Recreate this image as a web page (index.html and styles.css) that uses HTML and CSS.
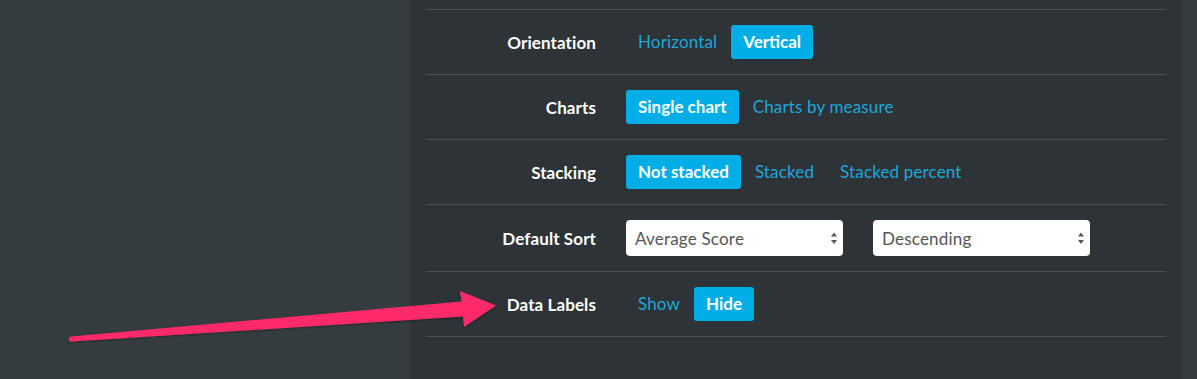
FILE: index.html
```html
<!DOCTYPE html>
<html>
<head>
<meta charset="utf-8">
<link rel="stylesheet" href="styles.css">
</head>
<body>
<div class="page">
  <div class="side"></div>
  <div class="panel">
    <div class="row">
      <div class="label">Orientation</div>
      <div class="options">
        <span class="opt">Horizontal</span>
        <span class="opt active">Vertical</span>
      </div>
    </div>
    <div class="row">
      <div class="label">Charts</div>
      <div class="options">
        <span class="opt active">Single chart</span>
        <span class="opt">Charts by measure</span>
      </div>
    </div>
    <div class="row">
      <div class="label">Stacking</div>
      <div class="options">
        <span class="opt active">Not stacked</span>
        <span class="opt">Stacked</span>
        <span class="opt">Stacked percent</span>
      </div>
    </div>
    <div class="row">
      <div class="label">Default Sort</div>
      <div class="selects">
        <div class="select">
          <span>Average Score</span>
          <svg class="caret" width="8" height="13" viewBox="0 0 8 13"><path d="M4 0.5 L7 4.5 L1 4.5 Z M1 8 L7 8 L4 12 Z" fill="#555"/></svg>
        </div>
        <div class="select">
          <span>Descending</span>
          <svg class="caret" width="8" height="13" viewBox="0 0 8 13"><path d="M4 0.5 L7 4.5 L1 4.5 Z M1 8 L7 8 L4 12 Z" fill="#555"/></svg>
        </div>
      </div>
    </div>
    <div class="row">
      <div class="label">Data Labels</div>
      <div class="options">
        <span class="opt">Show</span>
        <span class="opt active">Hide</span>
      </div>
    </div>
  </div>
  <div class="edge"></div>
</div>
<svg class="arrow" width="1197" height="379" viewBox="0 0 1197 379">
  <defs>
    <filter id="sh" x="-10%" y="-50%" width="120%" height="200%">
      <feDropShadow dx="0" dy="1" stdDeviation="1" flood-color="#000" flood-opacity="0.35"/>
    </filter>
  </defs>
  <path filter="url(#sh)" fill="#ff2a6a" d="M71 336.6 L461.5 301.5 L460 291 L496 305.5 L464 327 L463 316.5 L71.6 341.6 A2.5 2.5 0 0 1 71 336.6 Z"/>
</svg>
</body>
</html>
```
FILE: styles.css
```css
html, body {
  margin: 0;
  padding: 0;
}
body {
  background: #353c3f;
  font-family: "Lato", "Liberation Sans", sans-serif;
  width: 1197px;
  height: 379px;
  overflow: hidden;
  position: relative;
}
.page {
  display: flex;
  height: 379px;
}
.side {
  width: 411px;
  flex: none;
}
.panel {
  width: 740px;
  flex: none;
  background: #2d3336;
  padding: 9px 15px 0;
}
.edge {
  flex: 1;
}
.row {
  display: flex;
  align-items: center;
  gap: 30px;
  padding: 15px 0;
  border-top: 1px solid #4d5355;
}
.row:last-child {
  border-bottom: 1px solid #4d5355;
}
.label {
  width: 170px;
  flex: none;
  text-align: right;
  color: #ffffff;
  font-weight: 700;
  font-size: 17px;
  letter-spacing: 0.1px;
}
.options {
  display: flex;
  gap: 2px;
}
.opt {
  height: 34px;
  line-height: 34px;
  padding: 0 12px;
  border-radius: 3px;
  color: #1ca7db;
  font-size: 17px;
  letter-spacing: 0.15px;
}
.opt.active {
  background: #00aee7;
  color: #ffffff;
  font-weight: 700;
  letter-spacing: 0;
}
.selects {
  display: flex;
  gap: 30px;
}
.select {
  width: 217px;
  height: 36px;
  box-sizing: border-box;
  background: #ffffff;
  border-radius: 4px;
  display: flex;
  align-items: center;
  justify-content: space-between;
  padding: 0 5px 0 9px;
  color: #555555;
  font-size: 17px;
  letter-spacing: 0.2px;
}
.caret {
  display: block;
}
.arrow {
  position: absolute;
  left: 0;
  top: 0;
  pointer-events: none;
}
```
